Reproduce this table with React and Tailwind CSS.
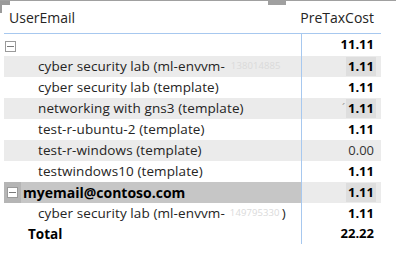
import React from "react";

const rows = [
    { label: "cyber security lab (ml-envvm-", hidden: "138014885", value: "1.11", shade: true, mark: true },
    { label: "cyber security lab (template)", value: "1.11" },
    { label: "networking with gns3 (template)", value: "1.11", shade: true, mark: true, tick: true },
    { label: "test-r-ubuntu-2 (template)", value: "1.11" },
    { label: "test-r-windows (template)", value: "0.00", shade: true, light: true },
    { label: "testwindows10 (template)", value: "1.11" },
];

// Small collapse box drawn in front of a group row
function CollapseIcon() {
    return (
        <span className="inline-flex items-center justify-center w-[11px] h-[11px] border border-[#9a9a9a] bg-white">
            <span className="block w-[7px] h-px bg-[#7a7a7a]" />
        </span>
    );
}

function ValueCell({ value, mark, light, tick }) {
    return (
        <div className="w-[80px] border-l border-[#a7c8ef] flex items-center justify-end pr-[5px] text-[13px]">
            {tick && <span className="text-[#999] text-[11px] mr-[1px]">´</span>}
            <span
                className={
                    (mark ? "bg-[#dedede] px-[2px] " : "px-[2px] ") +
                    (light ? "font-normal text-[#333]" : "font-bold text-black")
                }
            >
                {value}
            </span>
        </div>
    );
}

export default function App() {
    return (
        <div className="relative w-[396px] h-[255px] bg-white overflow-hidden font-['Open_Sans',sans-serif] text-[13.5px] text-[#252423] border-t border-[#a0a0a0]">
            {/* frame handles */}
            <div className="absolute left-0 top-0 w-[10px] h-[4px] bg-[#9a9a9a]" />
            <div className="absolute left-0 top-0 w-[2px] h-[12px] bg-[#9a9a9a]" />
            <div className="absolute left-[268px] top-0 w-[18px] h-[4px] bg-[#a0a0a0]" />

            <div className="ml-[4px] w-[377px]">
                <div className="h-[33px] flex items-center justify-between text-[14px] border-b border-[#a7c8ef]">
                    <span className="pl-[5px] pt-[1px]">UserEmail</span>
                    <span className="pr-[7px] pt-[1px]">PreTaxCost</span>
                </div>

                <div className="flex h-[22px]">
                    <div className="flex-1 flex items-center pl-[1px] pt-[2px]">
                        <CollapseIcon />
                    </div>
                    <ValueCell value="11.11" />
                </div>

                {rows.map((r, i) => (
                    <div
                        key={i}
                        className={"flex h-[21px] " + (r.shade ? "bg-[#ebebeb]" : "")}
                    >
                        <div className="flex-1 flex items-center pl-[34px] whitespace-nowrap overflow-hidden tracking-[0.1px]">
                            {r.label}
                            {r.hidden && (
                                <span className="text-[#dadada] text-[9.5px] ml-[6px]">{r.hidden}</span>
                            )}
                        </div>
                        <ValueCell value={r.value} mark={r.mark} light={r.light} tick={r.tick} />
                    </div>
                ))}

                <div className="flex h-[21px] bg-[#ebebeb]">
                    <div className="flex-1 flex items-center bg-[#c6c6c6] font-bold text-[14px] text-black">
                        <span className="w-[17px] h-full flex items-center justify-center bg-[#b5b5b5]">
                            <CollapseIcon />
                        </span>
                        <span className="pl-[2px]">myemail@contoso.com</span>
                    </div>
                    <ValueCell value="1.11" mark />
                </div>

                <div className="flex h-[21px]">
                    <div className="flex-1 flex items-center pl-[34px] whitespace-nowrap overflow-hidden tracking-[0.1px]">
                        cyber security lab (ml-envvm-
                        <span className="text-[#dadada] text-[9.5px] ml-[5px]">149795330</span>
                        <span className="ml-[2px]">)</span>
                    </div>
                    <ValueCell value="1.11" />
                </div>

                <div className="flex h-[20px]">
                    <div className="flex-1 flex items-center pl-[24px] font-bold text-black">Total</div>
                    <ValueCell value="22.22" />
                </div>
            </div>
        </div>
    );
}
